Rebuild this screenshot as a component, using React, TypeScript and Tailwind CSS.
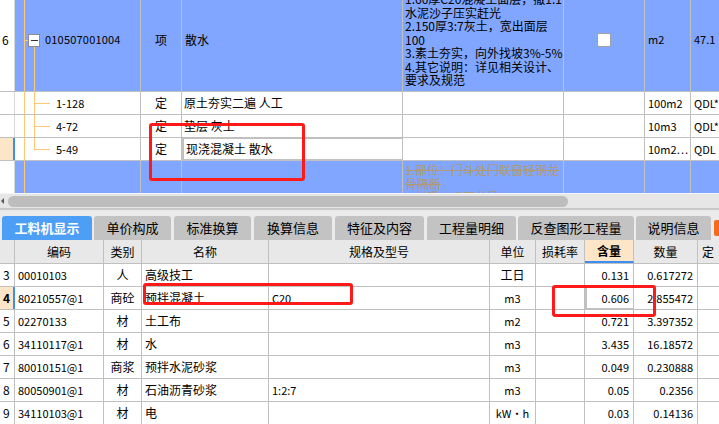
import type { ReactNode } from 'react';

const TOP_W = [15, 126, 41, 221, 161, 81, 46, 28];
const BOT_W = [15, 89, 38, 127, 221, 46, 49, 49, 64, 21];
const ORANGE = '#ffc874';

const descLines = [
  '1.60厚C20混凝土面层，撒1:1',
  '水泥沙子压实赶光',
  '2.150厚3:7灰土，宽出面层',
  '100',
  '3.素土夯实，向外找坡3%-5%',
  '4.其它说明：详见相关设计、',
  '要求及规范',
];

const children = [
  { code: '1-128', name: '原土夯实二遍 人工', unit: '100m2', qty: 'QDL*' },
  { code: '4-72', name: '垫层 灰土', unit: '10m3', qty: 'QDL*' },
  { code: '5-49', name: '现浇混凝土 散水', unit: '10m2⋯', qty: 'QDL' },
];

const tabs = [
  { label: '工料机显示', w: 'w-[90px]', ml: 'ml-[2px]' },
  { label: '单价构成', w: 'w-[77px]', ml: 'ml-[2px]' },
  { label: '标准换算', w: 'w-[77px]', ml: 'ml-[3px]' },
  { label: '换算信息', w: 'w-[78px]', ml: 'ml-[3px]' },
  { label: '特征及内容', w: 'w-[89px]', ml: 'ml-[3px]' },
  { label: '工程量明细', w: 'w-[89px]', ml: 'ml-[3px]' },
  { label: '反查图形工程量', w: 'w-[116px]', ml: 'ml-[2px]' },
  { label: '说明信息', w: 'w-[75px]', ml: 'ml-[2px]' },
];

const headers = ['', '编码', '类别', '名称', '规格及型号', '单位', '损耗率', '含量', '数量', '定'];

const rows = [
  ['3', '00010103', '人', '高级技工', '', '工日', '', '0.131', '0.617272'],
  ['4', '80210557@1', '商砼', '预拌混凝土', 'C20', 'm3', '', '0.606', '2.855472'],
  ['5', '02270133', '材', '土工布', '', 'm2', '', '0.721', '3.397352'],
  ['6', '34110117@1', '材', '水', '', 'm3', '', '3.435', '16.18572'],
  ['7', '80010151@1', '商浆', '预拌水泥砂浆', '', 'm3', '', '0.049', '0.230888'],
  ['8', '80050901@1', '材', '石油沥青砂浆', '1:2:7', 'm3', '', '0.05', '0.2356'],
  ['9', '34110103@1', '材', '电', '', 'kW·h', '', '0.03', '0.14136'],
];

function Cell({ w, className = '', children }: { w: number; className?: string; children?: ReactNode }) {
  return (
    <div className={`shrink-0 border-r border-[#c0c0c0] flex items-center overflow-hidden whitespace-nowrap ${className}`} style={{ width: w }}>
      {children}
    </div>
  );
}

// 树形连线
function Tree({ h, kind }: { h: number; kind: 'parent' | 'child' | 'last' | 'none' }) {
  const mid = Math.floor(h / 2) + 0.5;
  return (
    <svg width={126} height={h} className="absolute left-0 top-0" shapeRendering="crispEdges">
      <line x1={9.5} y1={0} x2={9.5} y2={h} stroke={ORANGE} />
      {kind === 'parent' && (
        <>
          <line x1={9.5} y1={mid} x2={13} y2={mid} stroke={ORANGE} />
          <rect x={13.5} y={mid - 6} width={11} height={12} fill="#fff" stroke="#8c8c8c" />
          <line x1={16} y1={mid} x2={23} y2={mid} stroke="#333" />
          <line x1={19.5} y1={mid + 6.5} x2={19.5} y2={h} stroke={ORANGE} />
        </>
      )}
      {(kind === 'child' || kind === 'last') && (
        <>
          <line x1={19.5} y1={0} x2={19.5} y2={kind === 'last' ? mid : h} stroke={ORANGE} />
          <line x1={19.5} y1={mid} x2={35} y2={mid} stroke={ORANGE} />
        </>
      )}
    </svg>
  );
}

function TopGrid() {
  return (
    <div className="h-[193px] overflow-hidden">
      <div className="-mt-[12px]">
        {/* 清单行 */}
        <div className="flex h-[104px] bg-[#80a6ff] border-b border-[#c0c0c0]">
          <Cell w={TOP_W[0]} className="bg-white pl-[2px] text-[12px] border-[#d8d8d8]">6</Cell>
          <Cell w={TOP_W[1]} className="relative pl-[30px] text-[11px]">
            <Tree h={104} kind="parent" />
            <span className="relative tracking-[0.2px]">010507001004</span>
          </Cell>
          <Cell w={TOP_W[2]} className="justify-center text-[12px]">项</Cell>
          <Cell w={TOP_W[3]} className="pl-[3px] text-[12px]">散水</Cell>
          <Cell w={TOP_W[4]} className="pl-[2px] text-[12px]">
            <div className="leading-[13.5px]">
              {descLines.map(l => (
                <div key={l}>{l}</div>
              ))}
            </div>
          </Cell>
          <Cell w={TOP_W[5]} className="justify-center">
            <div className="w-[14px] h-[14px] bg-white border border-[#a0a0a0] rounded-[2px]" />
          </Cell>
          <Cell w={TOP_W[6]} className="pl-[3px] text-[11px]">m2</Cell>
          <Cell w={TOP_W[7]} className="pl-[3px] text-[11px] border-r-0">47.1</Cell>
        </div>

        {children.map((c, i) => {
          const sel = i === children.length - 1;
          return (
            <div key={c.code} className="flex h-[23px] bg-white border-b border-[#c0c0c0]">
              <Cell w={TOP_W[0]} className={sel ? 'bg-[#fde5c7] border-r-2 border-r-[#3d8ef0]' : 'border-[#d8d8d8]'} />
              <Cell w={TOP_W[1]} className="relative pl-[41px] text-[11px]">
                <Tree h={23} kind={sel ? 'last' : 'child'} />
                <span className="relative">{c.code}</span>
              </Cell>
              <Cell w={TOP_W[2]} className="justify-center text-[12px]">定</Cell>
              <Cell
                w={TOP_W[3]}
                className={`pl-[2px] text-[12px] ${sel ? 'border-2 border-[#3399ff] -my-px h-[24px]' : ''}`}
              >
                {c.name}
              </Cell>
              <Cell w={TOP_W[4]} />
              <Cell w={TOP_W[5]} />
              <Cell w={TOP_W[6]} className="pl-[3px] text-[11px]">{c.unit}</Cell>
              <Cell w={TOP_W[7]} className="pl-[3px] text-[11px] border-r-0">{c.qty}</Cell>
            </div>
          );
        })}

        {/* 下一条清单(已删除) */}
        <div className="flex h-[44px] bg-[#80a6ff]">
          <Cell w={TOP_W[0]} className="bg-white border-[#d8d8d8]" />
          <Cell w={TOP_W[1]} className="relative">
            <Tree h={44} kind="none" />
          </Cell>
          <Cell w={TOP_W[2]} />
          <Cell w={TOP_W[3]} />
          <Cell w={TOP_W[4]} className="items-start pl-[2px] pt-[2px] text-[12px] text-[#b09a72]">
            <div className="leading-[13.5px] line-through">
              <div>1.部位：门斗处门联窗轻钢龙</div>
              <div>骨隔断</div>
              <div>2.材质：轻钢龙骨</div>
            </div>
          </Cell>
          <Cell w={TOP_W[5]} />
          <Cell w={TOP_W[6]} />
          <Cell w={TOP_W[7]} className="border-r-0" />
        </div>
      </div>
    </div>
  );
}

function ScrollBar() {
  return (
    <div className="h-[17px] bg-[#e6e6e6] border-t border-[#f4f4f4] border-b-2 border-b-[#c8c8c8] flex items-center">
      <div className="w-0 h-0 border-y-[3px] border-y-transparent border-r-[3px] border-r-[#555] ml-px" />
      <div className="ml-[4px] w-[560px] h-[11px] rounded-[6px] bg-[#bdbdbd]" />
    </div>
  );
}

function Tabs() {
  return (
    <div className="h-[30px] bg-[#ebebeb] flex items-end">
      {tabs.map((t, i) => (
        <div
          key={t.label}
          className={`${t.w} ${t.ml} h-[24px] shrink-0 rounded-t-[3px] flex items-center justify-center text-[13px] ${
            i === 0 ? 'bg-[#4d9ff5] text-white font-bold' : 'bg-[#c3c3c3] text-black'
          }`}
        >
          {t.label}
        </div>
      ))}
      <div className="ml-[3px] w-[6px] h-[16px] mb-[4px] bg-[#f56a1f] rounded-l-[2px]" />
    </div>
  );
}

function BottomGrid() {
  return (
    <div>
      <div className="flex h-[24px] bg-[#e8e8e8] border-b border-[#c0c0c0] text-[12px]">
        {headers.map((h, i) => (
          <Cell
            key={i}
            w={BOT_W[i]}
            className={`justify-center ${i === 7 ? 'bg-[#fde5c7] font-bold border-b-2 border-b-[#3d8ef0]' : ''} ${
              i === 9 ? 'justify-start pl-[4px] border-r-0' : ''
            }`}
          >
            {h}
          </Cell>
        ))}
      </div>
      {rows.map(r => {
        const sel = r[0] === '4';
        return (
          <div key={r[0]} className="flex h-[23px] bg-white border-b border-[#c0c0c0]">
            <Cell
              w={BOT_W[0]}
              className={`pl-[3px] text-[12px] ${sel ? 'bg-[#fde5c7] font-bold border-r-2 border-r-[#3d8ef0]' : ''}`}
            >
              {r[0]}
            </Cell>
            <Cell w={BOT_W[1]} className="pl-[3px] text-[11px]">{r[1]}</Cell>
            <Cell w={BOT_W[2]} className="justify-center text-[12px]">{r[2]}</Cell>
            <Cell w={BOT_W[3]} className="pl-[3px] text-[12px]">{r[3]}</Cell>
            <Cell w={BOT_W[4]} className="pl-[3px] text-[11px]">{r[4]}</Cell>
            <Cell w={BOT_W[5]} className={`justify-center ${r[5] === '工日' ? 'text-[12px]' : 'text-[11px]'}`}>{r[5]}</Cell>
            <Cell w={BOT_W[6]} />
            <Cell
              w={BOT_W[7]}
              className={`justify-end pr-[4px] text-[11px] ${sel ? 'border-2 border-[#808080] -my-px h-[24px]' : ''}`}
            >
              {r[7]}
            </Cell>
            <Cell w={BOT_W[8]} className="justify-end pr-[4px] text-[11px]">{r[8]}</Cell>
            <Cell w={BOT_W[9]} className="border-r-0" />
          </div>
        );
      })}
    </div>
  );
}

export default function App() {
  return (
    <div className="relative w-[719px] h-[424px] overflow-hidden bg-white text-black font-['Noto_Sans_CJK_SC',sans-serif]">
      <TopGrid />
      <ScrollBar />
      <Tabs />
      <BottomGrid />

      {/* 标注框 */}
      <div className="absolute left-[149px] top-[123px] w-[156px] h-[58px] border-[3px] border-[#ff1a1a] rounded-[3px]" />
      <div className="absolute left-[143px] top-[283px] w-[210px] h-[22px] border-[3px] border-[#ff1a1a] rounded-[3px]" />
      <div className="absolute left-[552px] top-[285px] w-[104px] h-[32px] border-[3px] border-[#ff1a1a] rounded-[3px]" />
    </div>
  );
}
